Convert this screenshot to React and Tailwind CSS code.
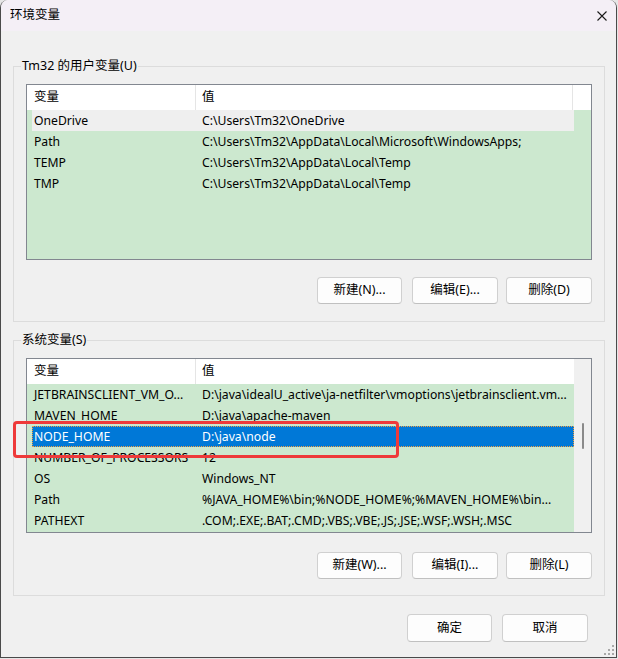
import React from "react";

const userVars = [
  ["OneDrive", "C:\\Users\\Tm32\\OneDrive", "gray"],
  ["Path", "C:\\Users\\Tm32\\AppData\\Local\\Microsoft\\WindowsApps;", ""],
  ["TEMP", "C:\\Users\\Tm32\\AppData\\Local\\Temp", ""],
  ["TMP", "C:\\Users\\Tm32\\AppData\\Local\\Temp", ""],
];

const sysVars = [
  ["JETBRAINSCLIENT_VM_O...", "D:\\java\\idealU_active\\ja-netfilter\\vmoptions\\jetbrainsclient.vm...", ""],
  ["MAVEN_HOME", "D:\\java\\apache-maven", ""],
  ["NODE_HOME", "D:\\java\\node", "sel"],
  ["NUMBER_OF_PROCESSORS", "12", ""],
  ["OS", "Windows_NT", ""],
  ["Path", "%JAVA_HOME%\\bin;%NODE_HOME%;%MAVEN_HOME%\\bin...", ""],
  ["PATHEXT", ".COM;.EXE;.BAT;.CMD;.VBS;.VBE;.JS;.JSE;.WSF;.WSH;.MSC", ""],
];

function Row({ name, value, state }) {
  let hl = "";
  if (state === "gray") hl = "bg-[#efefef] text-black";
  if (state === "sel")
    hl = "bg-[#0078d7] text-white outline-1 outline-dotted outline-[#f0a040] -outline-offset-1";
  return (
    <div className="flex h-[21px] shrink-0 pl-[5px] text-[12.2px]">
      <div className={"flex w-[542px] items-center pt-[1px] " + hl}>
        <div className="w-[164px] shrink-0 overflow-hidden whitespace-nowrap pl-[2px]">{name}</div>
        <div className="flex-1 whitespace-nowrap pl-[6px]">{value}</div>
      </div>
    </div>
  );
}

function Header({ full }) {
  return (
    <div className="flex h-[25px] shrink-0 bg-white">
      <div className="flex w-[169px] shrink-0 items-center border-r border-[#e5e5e5] pl-[7px]">变量</div>
      <div className={"flex w-[377px] shrink-0 items-center pl-[6px] " + (full ? "border-r border-[#e5e5e5]" : "")}>值</div>
    </div>
  );
}

function Btn({ children, className = "" }) {
  return (
    <button
      className={
        "flex h-[27px] items-center justify-center rounded-[4px] border border-[#d0d0d0] border-b-[#c0c0c0] bg-[#fdfdfd] text-[12.5px] text-black " +
        className
      }
    >
      {children}
    </button>
  );
}

function Group({ title, children, className = "" }) {
  return (
    <fieldset className={"ml-[12px] w-[592px] border border-[#dcdcdc] px-[12px] pt-[10px] " + className}>
      <legend className="ml-[-5px] px-[1px] leading-[16px]">{title}</legend>
      {children}
    </fieldset>
  );
}

export default function App() {
  return (
    <div className="relative h-[659px] w-[618px] bg-[#e6e6e6] font-['Noto_Sans','Noto_Sans_CJK_SC',sans-serif] text-[12.5px] text-black">
      <div className="relative flex h-[658px] w-[617px] flex-col overflow-hidden rounded-t-[8px] border-x border-b border-[#4a4a4a] bg-[#f0f0f0]">
        {/* title bar */}
        <div className="flex h-[31px] shrink-0 items-center justify-between bg-[#f4eff6] pl-[9px] pr-[9px]">
          <span className="text-[12.5px]">环境变量</span>
          <svg width="10" height="10" viewBox="0 0 10 10">
            <path d="M0.5 0.5 L9.5 9.5 M9.5 0.5 L0.5 9.5" stroke="#1a1a1a" strokeWidth="1.1" />
          </svg>
        </div>

        {/* user variables */}
        <Group title="Tm32 的用户变量(U)" className="mt-[27px] pb-[17px]">
          <div className="flex h-[176px] flex-col overflow-hidden border border-[#828790] bg-[#cce8cf]">
            <div className="flex h-[25px] shrink-0 bg-white">
              <Header full />
            </div>
            {userVars.map(([n, v, s]) => (
              <Row key={n} name={n} value={v} state={s} />
            ))}
          </div>
          <div className="mt-[17px] flex justify-end">
            <Btn className="w-[85px]">新建(N)...</Btn>
            <Btn className="ml-[10px] w-[86px]">编辑(E)...</Btn>
            <Btn className="ml-[8px] w-[86px]">删除(D)</Btn>
          </div>
        </Group>

        {/* system variables */}
        <Group title="系统变量(S)" className="mt-[10px] pb-[16px]">
          <div className="flex h-[175px] overflow-hidden border border-[#828790]">
            <div className="flex w-[547px] flex-col bg-[#cce8cf]">
              <Header />
              {sysVars.map(([n, v, s]) => (
                <Row key={n} name={n} value={v} state={s} />
              ))}
            </div>
            <div className="flex flex-1 justify-center bg-[#f0f0f0]">
              <div className="mt-[64px] h-[26px] w-[2px] rounded-full bg-[#8a8a8a]" />
            </div>
          </div>
          <div className="mt-[19px] flex justify-end">
            <Btn className="w-[85px]">新建(W)...</Btn>
            <Btn className="ml-[10px] w-[86px]">编辑(I)...</Btn>
            <Btn className="ml-[8px] w-[86px]">删除(L)</Btn>
          </div>
        </Group>

        {/* dialog buttons */}
        <div className="ml-[12px] mt-[18px] flex w-[592px] justify-end pr-[17px]">
          <Btn className="h-[28px] w-[85px] border-[#005fb8] border-b-[#005fb8]">确定</Btn>
          <Btn className="ml-[10px] h-[28px] w-[86px]">取消</Btn>
        </div>

        {/* size grip */}
        <svg className="absolute bottom-[1px] right-[1px]" width="11" height="11" viewBox="0 0 11 11">
          {[
            [8, 0],
            [4, 4],
            [8, 4],
            [0, 8],
            [4, 8],
            [8, 8],
          ].map(([x, y], i) => (
            <rect key={i} x={x} y={y} width="2" height="2" fill="#a8a8a8" />
          ))}
        </svg>
      </div>

      {/* red annotation */}
      <div className="absolute left-[13px] top-[421px] h-[37px] w-[386px] rounded-[4px] border-[3px] border-[#ee3a3a]" />
    </div>
  );
}
